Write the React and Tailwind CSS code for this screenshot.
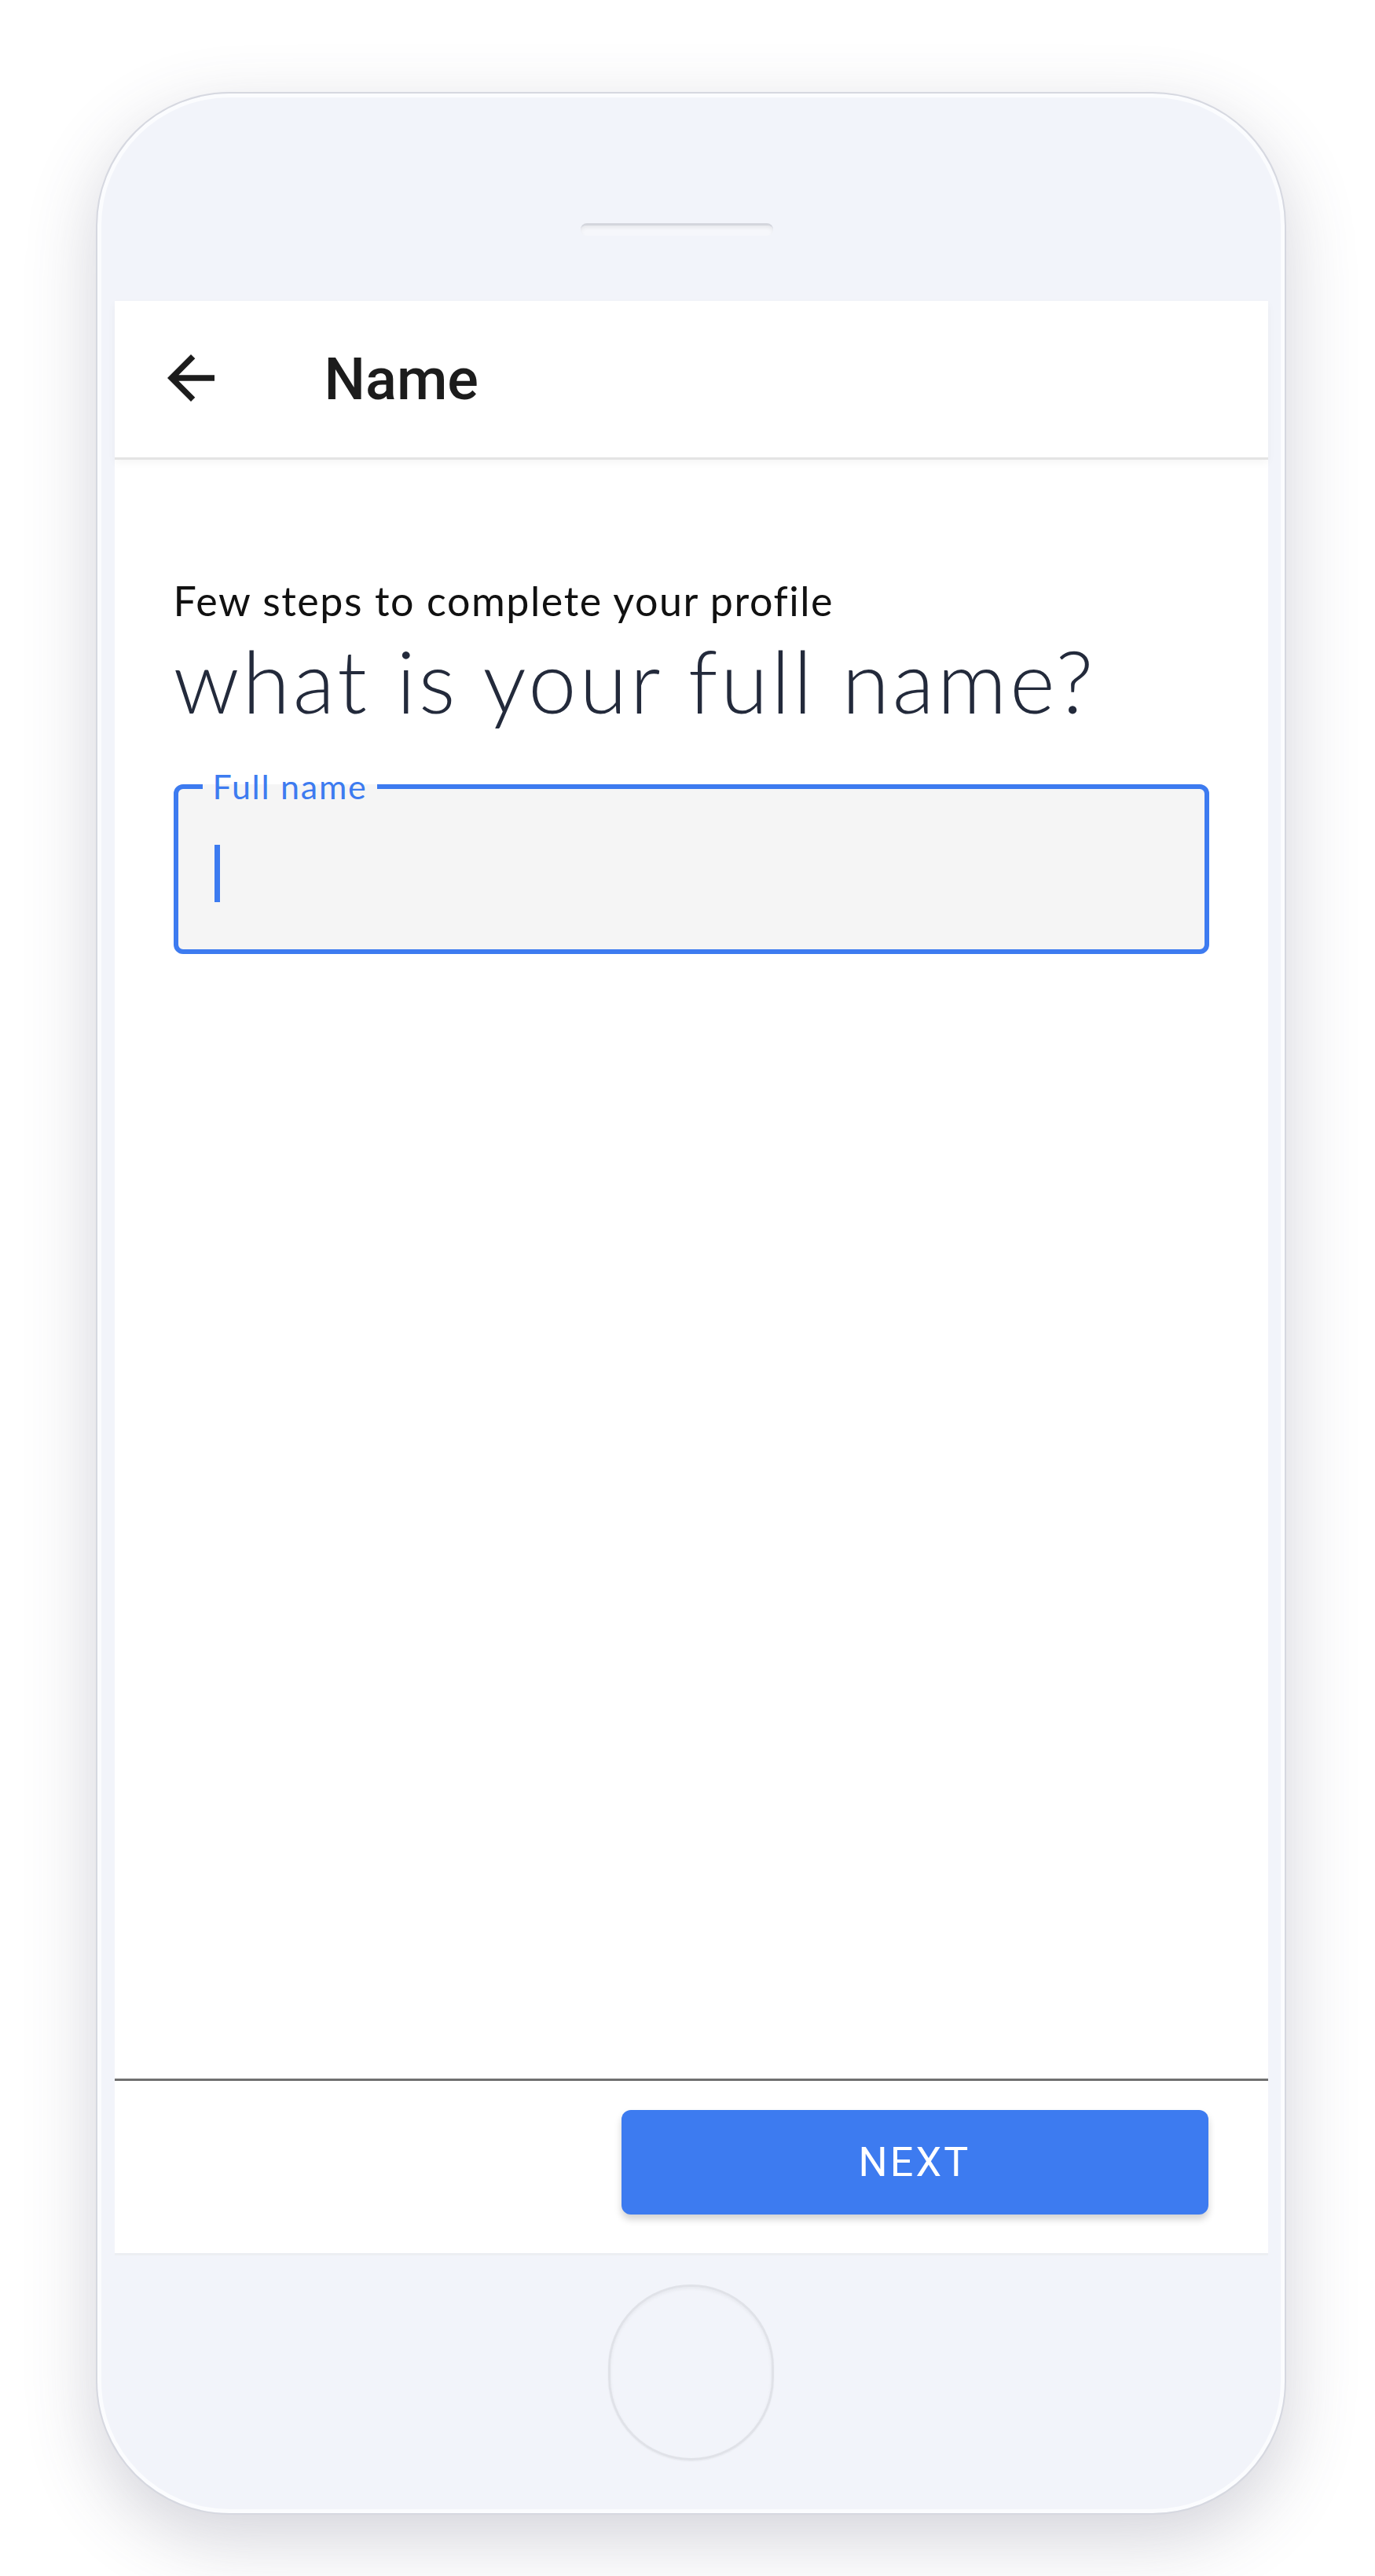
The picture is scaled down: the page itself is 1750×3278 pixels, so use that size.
import React, { useState } from 'react';

// Flecha "atrás" estilo Material
const BackArrow = () => (
    <svg viewBox="0 0 24 24" className="w-[90px] h-[90px]" fill="#1c1c1c">
        <path d="M20 11H7.83l5.59-5.59L12 4l-8 8 8 8 1.41-1.41L7.83 13H20v-2z" />
    </svg>
);

const App = () => {
    const [fullName, setFullName] = useState("");

    return (
        <div className="w-[1750px] h-[3278px] bg-white pt-[117px] pl-[122px]">
            {/* Marco del teléfono */}
            <div className="w-[1515px] h-[3083px] rounded-[170px] bg-[#f2f4fa] border-[2px] border-[#d6d8e0] shadow-[0_30px_90px_rgba(70,72,100,0.24),inset_0_0_0_5px_#fbfcfe] flex flex-col items-center">
                {/* Bisel superior */}
                <div className="h-[264px] w-full flex justify-center pt-[165px]">
                    <div className="mr-[36px] w-[245px] h-[16px] rounded-full border-t-[3px] border-[#d4d6dd] bg-[#f6f7fb] shadow-[inset_0_3px_4px_rgba(0,0,0,0.06)]" />
                </div>

                {/* Pantalla */}
                <div className="w-[1468px] h-[2487px] bg-white flex flex-col font-['Lato',sans-serif]">
                    {/* Barra superior */}
                    <div className="h-[202px] flex items-center border-b-[3px] border-[#e4e4e4] shadow-[0_4px_10px_rgba(0,0,0,0.04)]">
                        <button className="ml-[52px] mt-[-4px]">
                            <BackArrow />
                        </button>
                        <h1 className="ml-[125px] text-[74px] font-medium leading-none text-[#1c1c1c] font-['Roboto',sans-serif]">
                            Name
                        </h1>
                    </div>

                    {/* Contenido */}
                    <div className="flex-1 px-[75px] pt-[153px]">
                        <p className="text-[52px] leading-none tracking-[0.03em] text-[#111111]">
                            Few steps to complete your profile
                        </p>
                        <h2 className="mt-[20px] text-[110px] font-light leading-none tracking-[0.035em] text-[#232a3b]">
                            what is your full name?
                        </h2>

                        <fieldset className="mt-[59px] border-[6px] border-[#3d7bf0] rounded-[12px] bg-[#f5f5f5] pl-[31px] pt-[50px] pb-[58px]">
                            <legend className="px-[13px] text-[43px] leading-none tracking-[0.04em] text-[#3d7bf0]">
                                Full name
                            </legend>
                            <div className="flex items-center">
                                <div className="ml-[15px] w-[7px] h-[73px] bg-[#3d7bf0]" />
                                <input
                                    value={fullName}
                                    onChange={(e) => setFullName(e.target.value)}
                                    className="flex-1 bg-transparent outline-none text-[52px]"
                                />
                            </div>
                        </fieldset>
                    </div>

                    {/* Pie con botón */}
                    <div className="h-[3px] bg-[#707070]" />
                    <div className="h-[222px] flex justify-end pt-[37px] pr-[76px] border-b-[3px] border-[#eceef2]">
                        <button className="w-[747px] h-[133px] rounded-[12px] bg-[#3d7bf0] text-white text-[52px] tracking-[0.06em] font-['Roboto',sans-serif] shadow-[0_6px_10px_rgba(0,0,0,0.18)]">
                            NEXT
                        </button>
                    </div>
                </div>

                {/* Bisel inferior con botón de inicio */}
                <div className="w-full flex justify-center pt-[37px]">
                    <div className="w-[211px] h-[224px] rounded-full border-[3px] border-[#e0e2e8] shadow-[inset_0_2px_4px_rgba(0,0,0,0.05),0_1px_2px_rgba(0,0,0,0.05)]" />
                </div>
            </div>
        </div>
    );
};

export default App;
